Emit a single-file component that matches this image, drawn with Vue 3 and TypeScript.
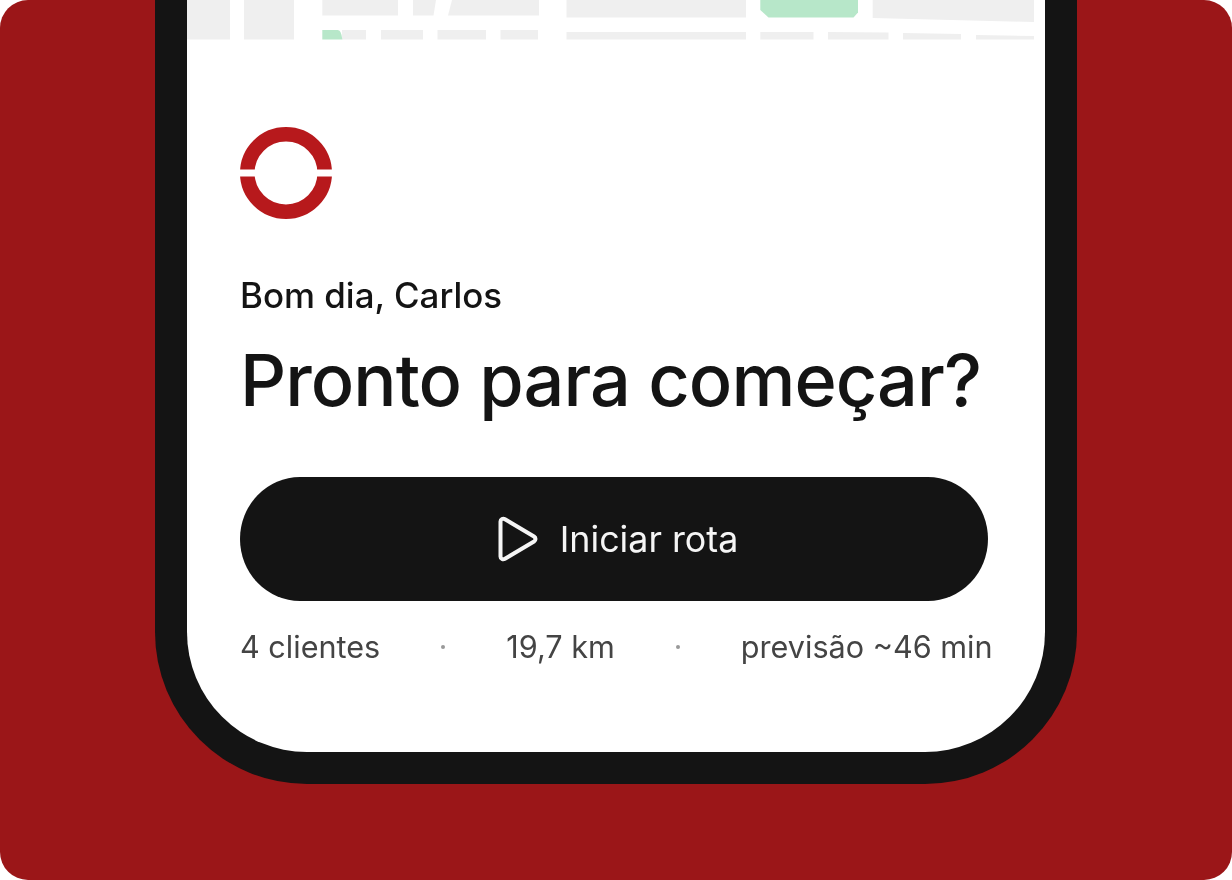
<script setup lang="ts">
const blocks: string[] = [
  '0,0 43,0 43,39.5 0,39.5',
  '57,0 107,0 107,39.5 57,39.5',
  '135.3,0 211,0 211,15.5 135.3,15.5',
  '226,0 249,0 246.5,15.5 226,15.5',
  '265,0 352,0 352,15.5 261,15.5',
  '379.5,0 559,0 559,17.5 379.5,17.5',
  '685.7,0 847,0 847,22 685.7,18',
  '155,30 179,30 179,39.5 155,39.5',
  '194,30 236,30 236,39.5 194,39.5',
  '250.5,30 299,30 299,39.5 250.5,39.5',
  '313.5,30 351,30 351,39.5 313.5,39.5',
  '379.5,32 559,32 559,39.5 379.5,39.5',
  '573.3,32 626.5,32 626.5,39.5 573.3,39.5',
  '641,32 701.5,32.5 701.5,39.5 641,39.5',
  '716,33 774,34 774,39.5 716,39.5',
  '789,35 847,36 847,39.5 789,39.5',
]
const stats = ['4 clientes', '19,7 km', 'previsão ~46 min']
</script>

<template>
  <div class="canvas">
    <div class="phone">
      <div class="screen">
        <svg class="map" width="858" height="56" viewBox="0 0 858 56">
          <polygon v-for="(b, i) in blocks" :key="i" :points="b" fill="#efefef" />
          <path d="M573.3 0H671V12.5L666.5 17.5H581.5L573.3 10Z" fill="#b7e7c9" />
          <path d="M135.3 39.5V30H150.5C153 30 154.5 33 155.3 39.5Z" fill="#b7e7c9" />
        </svg>
        <div class="content">
          <svg class="logo" width="94" height="94" viewBox="0 0 94 94">
            <circle cx="47" cy="47" r="38.7" fill="none" stroke="#b7191c" stroke-width="14.6" />
            <rect x="0" y="43.5" width="94" height="7" fill="#fff" />
          </svg>
          <p class="greeting">Bom dia, Carlos</p>
          <h1 class="title">Pronto para começar?</h1>
          <button class="start" type="button">
            <svg width="44" height="48" viewBox="0 0 44 48" fill="none">
              <path d="M4.5 6.5C4.5 4 7 3 9 4.2L38 21.5C40 22.8 40 25.2 38 26.5L9 43.8C7 45 4.5 44 4.5 41.5Z" stroke="#f5f5f5" stroke-width="4" stroke-linejoin="round" />
            </svg>
            <span>Iniciar rota</span>
          </button>
          <div class="stats">
            <template v-for="(s, i) in stats" :key="s">
              <span v-if="i > 0" class="dot"></span>
              <span>{{ s }}</span>
            </template>
          </div>
        </div>
      </div>
    </div>
  </div>
</template>

<style>
html,
body {
  background: #fff;
}
</style>

<style scoped>
.canvas {
  width: 1232px;
  height: 880px;
  background: #9b1618;
  border-radius: 28px;
  overflow: hidden;
  display: flex;
  justify-content: center;
  align-items: flex-start;
  font-family: Inter, "Liberation Sans", sans-serif;
}

.phone {
  width: 922px;
  height: 784px;
  box-sizing: border-box;
  background: #141414;
  padding: 0 32px 32px;
  border-radius: 0 0 152px 152px;
}

.screen {
  height: 100%;
  background: #fff;
  border-radius: 0 0 120px 120px;
  overflow: hidden;
}

.map {
  display: block;
  filter: blur(0.4px);
}

.content {
  padding: 71px 0 0 52px;
  display: flex;
  flex-direction: column;
  align-items: flex-start;
  filter: blur(0.4px);
}

.logo {
  display: block;
  margin-top: -0.6px;
}

.greeting {
  margin: 51.6px 0 0 1px;
  font-size: 34.9px;
  line-height: 46px;
  font-weight: 450;
  color: #141414;
}

.title {
  margin: 18px 0 0 1px;
  font-size: 72px;
  line-height: 88px;
  font-weight: 450;
  letter-spacing: -0.95px;
  color: #141414;
}

.start {
  margin-top: 53px;
  margin-left: 1px;
  width: 748px;
  height: 124px;
  padding: 0 0 0 6px;
  border: 0;
  border-radius: 60px / 62px;
  background: #141414;
  color: #f5f5f5;
  font-family: inherit;
  font-size: 35.8px;
  display: flex;
  align-items: center;
  justify-content: center;
  gap: 20px;
}

.stats {
  margin-top: 26px;
  margin-left: 1px;
  display: flex;
  align-items: center;
  gap: 61px;
  font-size: 30.6px;
  line-height: 40px;
  color: #444;
  white-space: nowrap;
}

.dot {
  width: 4px;
  height: 4px;
  border-radius: 50%;
  background: #999;
}
</style>
